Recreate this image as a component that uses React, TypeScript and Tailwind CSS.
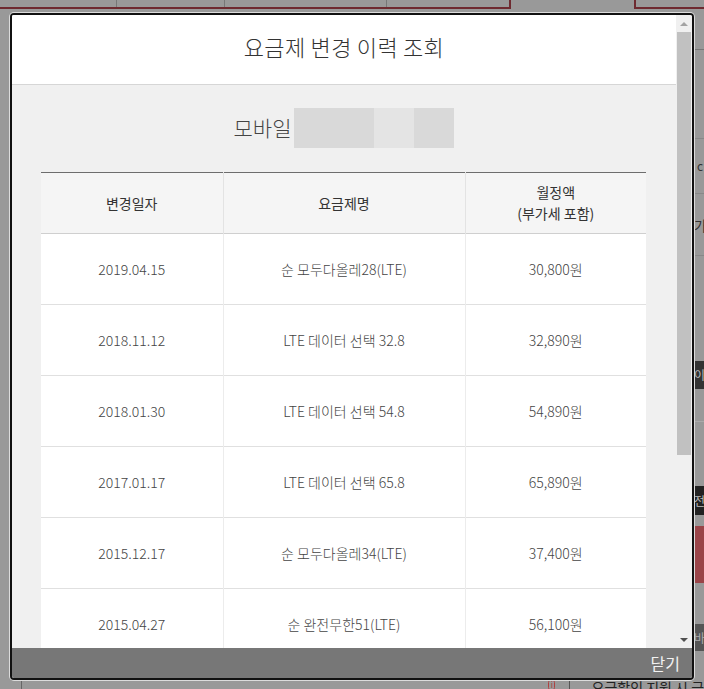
const rows = [
  { date: "2019.04.15", plan: "순 모두다올레28(LTE)", fee: "30,800원" },
  { date: "2018.11.12", plan: "LTE 데이터 선택 32.8", fee: "32,890원" },
  { date: "2018.01.30", plan: "LTE 데이터 선택 54.8", fee: "54,890원" },
  { date: "2017.01.17", plan: "LTE 데이터 선택 65.8", fee: "65,890원" },
  { date: "2015.12.17", plan: "순 모두다올레34(LTE)", fee: "37,400원" },
  { date: "2015.04.27", plan: "순 완전무한51(LTE)", fee: "56,100원" },
  { date: "2014.09.02", plan: "LTE-620", fee: "62,000원" },
];

const font = "font-['Malgun_Gothic','Noto_Sans_CJK_KR',sans-serif]";

// dimmed page behind the popup, laid out in plain flow
function Backdrop() {
  return (
    <div className="flex h-full flex-col">
      <div className="flex h-[13px] shrink-0">
        <div className="flex h-[9px] w-[511px] border-b-2 border-r-2 border-[#6e2a30]">
          <div className="w-[117px] border-r border-[#777]" />
          <div className="w-[108px] border-r border-[#777]" />
          <div className="w-[162px] border-r border-[#777]" />
        </div>
        <div className="w-[123px]" />
        <div className="h-[9px] flex-1 border-b-2 border-l-2 border-[#6e2a30]" />
      </div>
      <div className="flex min-h-0 flex-1">
        <div className="w-[694px] shrink-0" />
        <div className="flex flex-1 flex-col text-[12px] leading-none">
          <div className="h-[37px] border-b border-[#777]" />
          <div className="h-[89px] border-b border-[#888]" />
          <div className="flex h-[55px] items-center border-b border-[#888] pl-[3px] text-[#333]">c</div>
          <div className="flex h-[62px] items-center border-b border-[#888] text-[14px] text-[#333]">가</div>
          <div className="h-[105px]" />
          <div className="flex h-[28px] items-center bg-[#333] text-[#bbb]">이</div>
          <div className="h-[33px] border-b border-[#aaa]" />
          <div className="h-[64px]" />
          <div className="flex h-[29px] items-center bg-[#222] text-[#bbb]">전</div>
          <div className="h-[11px]" />
          <div className="h-[57px] bg-[#9a4448]" />
          <div className="h-[41px]" />
          <div className="flex h-[27px] items-center bg-[#555] text-[#aaa]">바</div>
        </div>
      </div>
      <div className="flex h-[9px] shrink-0 items-center overflow-hidden text-[14px] leading-none text-[#222]">
        <div className="ml-[21px] h-full w-px bg-[#666]" />
        <div className="ml-[527px] flex h-[12px] w-[12px] items-center justify-center rounded-full border border-[#b04040] text-[8px] text-[#b04040]">
          i
        </div>
        <div className="ml-[14px] h-full w-px bg-[#555]" />
        <span className="ml-[22px] mt-[4px] whitespace-nowrap">요금할인 지원 시 금</span>
      </div>
    </div>
  );
}

function Scrollbar() {
  return (
    <div className="flex w-[16px] shrink-0 flex-col items-center bg-[#f0f0f0]">
      <div className="flex h-[17px] items-center justify-center">
        <div className="h-0 w-0 border-x-[4px] border-b-[4px] border-x-transparent border-b-[#a3a3a3]" />
      </div>
      <div className="h-[423px] w-[14px] bg-[#c1c1c1]" />
      <div className="flex-1" />
      <div className="flex h-[17px] items-center justify-center">
        <div className="h-0 w-0 border-x-[4px] border-t-[4px] border-x-transparent border-t-[#505050]" />
      </div>
    </div>
  );
}

export default function App() {
  return (
    <div className={`relative h-[689px] w-[704px] overflow-hidden bg-[#999] ${font}`}>
      <Backdrop />
      <div className="absolute left-[10px] top-[13px] flex h-[667px] w-[684px] flex-col overflow-hidden rounded-[4px] border-2 border-[#111] bg-white shadow-[0_0_0_1px_#dcdcdc]">
        <div className="flex min-h-0 flex-1">
          <div className="min-w-0 flex-1 overflow-hidden bg-[#f0f0f0]">
            <div className="flex h-[70px] items-center justify-center border-b border-[#d6d6d6] bg-white pb-[6px]">
              <h1 className="text-[22px] font-light tracking-[0.3px] text-[#333]">요금제 변경 이력 조회</h1>
            </div>
            <div className="px-[29px] pt-[23px]">
              <div className="flex items-center justify-center">
                <span className="mr-[3px] text-[21px] font-light text-[#444]">모바일</span>
                <div className="flex h-[40px]">
                  <div className="w-[80px] bg-[#d9d9d9]" />
                  <div className="w-[40px] bg-[#e4e4e4]" />
                  <div className="w-[40px] bg-[#d9d9d9]" />
                </div>
              </div>
              <table className="mt-[24px] w-[605px] table-fixed border-collapse border-t border-[#6d6d6d] text-center">
                <colgroup>
                  <col className="w-[182px]" />
                  <col className="w-[242px]" />
                  <col />
                </colgroup>
                <thead>
                  <tr className="h-[61px] border-b border-[#cfcfcf] bg-[#f5f5f5] text-[14px] leading-[21px] text-[#333]">
                    <th className="border-r border-[#e3e3e3] font-normal">변경일자</th>
                    <th className="border-r border-[#e3e3e3] font-normal">요금제명</th>
                    <th className="font-normal">
                      월정액
                      <br />
                      (부가세 포함)
                    </th>
                  </tr>
                </thead>
                <tbody>
                  {rows.map((r) => (
                    <tr key={r.date} className="h-[71px] border-b border-[#e0e0e0] bg-white text-[14px] font-light text-[#444]">
                      <td className="border-r border-[#ececec]">{r.date}</td>
                      <td className="border-r border-[#ececec]">{r.plan}</td>
                      <td>{r.fee}</td>
                    </tr>
                  ))}
                </tbody>
              </table>
            </div>
          </div>
          <Scrollbar />
        </div>
        <div className="flex h-[30px] shrink-0 items-center justify-end bg-[#777] pr-[12px]">
          <button className="text-[16px] text-[#f2f2f2]">닫기</button>
        </div>
      </div>
    </div>
  );
}
